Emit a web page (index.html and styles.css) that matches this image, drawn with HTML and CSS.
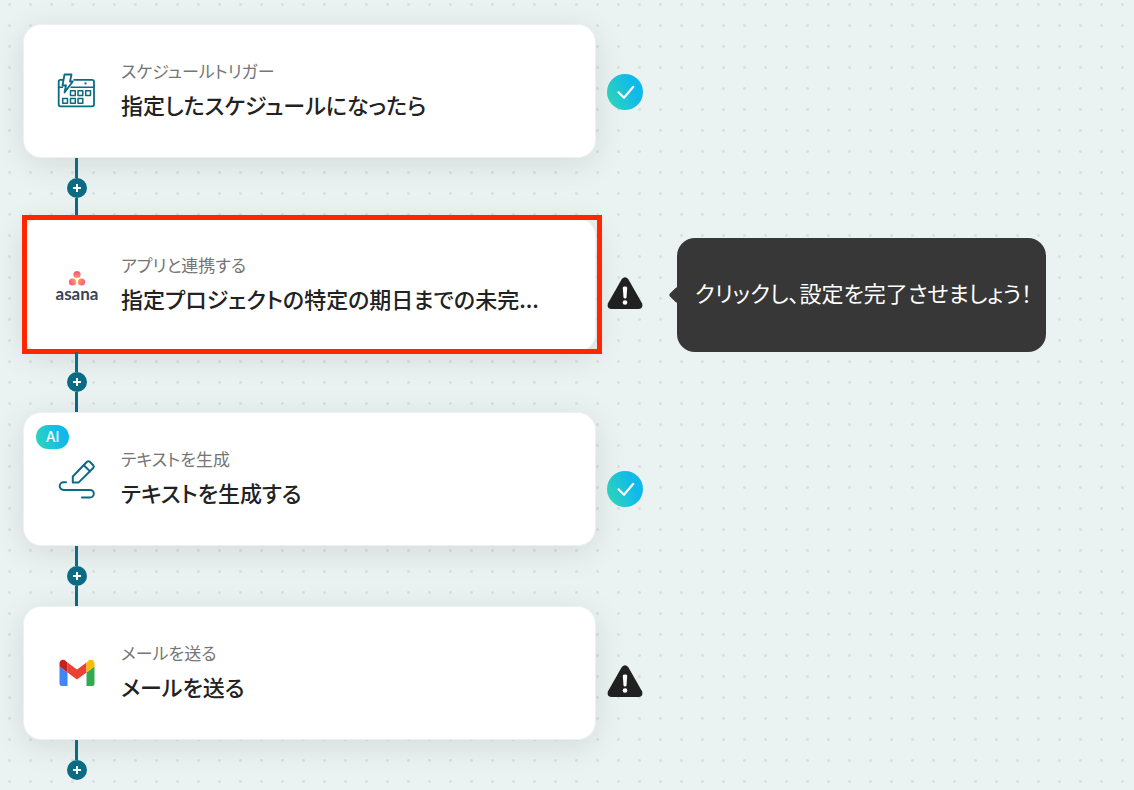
FILE: index.html
```html
<!DOCTYPE html>
<html lang="ja">
<head>
  <meta charset="UTF-8">
  <title>フロー編集</title>
  <meta name="viewport" content="width=device-width, initial-scale=1">
  <link rel="stylesheet" href="styles.css">
</head>
<body>

<!-- グラデーションの共通定義 -->
<svg class="defs" width="0" height="0" aria-hidden="true">
  <defs>
    <linearGradient id="done" x1="0" y1="0.7" x2="1" y2="0.3">
      <stop offset="0.05" stop-color="#2dd5c0"/>
      <stop offset="0.75" stop-color="#10b9ea"/>
    </linearGradient>
    <radialGradient id="asana" gradientUnits="userSpaceOnUse" cx="22" cy="12" r="10">
      <stop offset="0" stop-color="#ffb145"/>
      <stop offset="0.75" stop-color="#fc5d80"/>
      <stop offset="1" stop-color="#fb5a8c"/>
    </radialGradient>
    <symbol id="icon-check" viewBox="0 0 36 36">
      <circle cx="18" cy="18" r="18" fill="url(#done)"/>
      <path d="M11.500 18.300l5.500 5.400 9.300-10.900" fill="none" stroke="#fff" stroke-width="2.200" stroke-linecap="round" stroke-linejoin="round"/>
    </symbol>
    <symbol id="icon-warning" viewBox="0 0 36 32">
      <path d="M14.800 1.900Q18 -1.600 21.200 1.900L35 26.200Q36.500 31.500 32 32H4Q-0.500 31.500 1 26.200Z" fill="#212121"/>
      <path d="M15.800 10.800Q15.800 9.500 18 9.500T20.200 10.800L19.500 20.500Q19.300 21.500 18 21.500T16.500 20.500Z" fill="#fff"/>
      <circle cx="18" cy="25.500" r="2.300" fill="#fff"/>
    </symbol>
    <symbol id="icon-plus" viewBox="0 0 20 20">
      <path d="M10 6v8M6 10h8" stroke="#fff" stroke-width="2"/>
    </symbol>
  </defs>
</svg>

<main class="flow">
  <section class="step step-trigger">
    <article class="card">
      <svg class="card-icon" viewBox="0 0 44 44" fill="none" stroke="#0b6b84" stroke-width="1.800" stroke-linejoin="round">
        <path d="M9 10.800H5.500Q3.700 10.800 3.700 12.600V35.500Q3.700 37.300 5.500 37.300H37Q39 37.300 39 35.500V12.600Q39 10.800 37 10.800H18.500"/>
        <path d="M3.700 18.300H8M15.500 18.300H39" stroke-width="1.500"/>
        <path d="M9.500 5.500H16.500L15 12.500H17.800L9.500 23.500L11 16.500H7.500Z"/>
        <path d="M29.500 14.400h2" stroke-width="2"/>
        <path d="M15.500 21.800h4.800v4.800h-4.800zM23 21.800h4.800v4.800h-4.800zM30.700 21.800h4.800v4.800h-4.800zM7.700 29.500h4.800v4.800h-4.800zM15.500 29.500h4.800v4.800h-4.800zM23 29.500h4.800v4.800h-4.800z" stroke-width="1.500"/>
      </svg>
      <div class="card-text">
        <p class="kind">スケジュールトリガー</p>
        <h2 class="title">指定したスケジュールになったら</h2>
      </div>
    </article>
    <svg class="status" role="img" aria-label="設定済み"><use href="#icon-check"/></svg>
  </section>

  <div class="connector">
    <button class="add" type="button" aria-label="追加"><svg><use href="#icon-plus"/></svg></button>
  </div>

  <section class="step">
    <article class="card card-selected">
      <div class="card-icon asana">
        <svg viewBox="0 0 44 20" fill="url(#asana)">
          <circle cx="22" cy="6.500" r="3.600"/>
          <circle cx="17.500" cy="14" r="3.600"/>
          <circle cx="26.500" cy="14" r="3.600"/>
        </svg>
        <span>asana</span>
      </div>
      <div class="card-text">
        <p class="kind">アプリと連携する</p>
        <h2 class="title">指定プロジェクトの特定の期日までの未完...</h2>
      </div>
    </article>
    <svg class="status status-warning" role="img" aria-label="未設定"><use href="#icon-warning"/></svg>
    <p class="tooltip">クリックし、設定を完了させましょう！</p>
  </section>

  <div class="connector">
    <button class="add" type="button" aria-label="追加"><svg><use href="#icon-plus"/></svg></button>
  </div>

  <section class="step">
    <article class="card">
      <span class="badge">AI</span>
      <svg class="card-icon" viewBox="0 0 44 44" fill="none" stroke="#0b6b84" stroke-width="2" stroke-linecap="round" stroke-linejoin="round">
        <path d="M17.800 19.500L32 4.800Q33.400 3.600 34.800 4.800L38.200 8.300Q39.400 9.600 38.200 11L23.500 25.600H17.800Z"/>
        <path d="M28.800 8.200l6.200 6.200"/>
        <path d="M11 25.300H8.500A3.700 3.700 0 0 0 8.500 32.900H35A3.700 3.700 0 0 1 35 40.500H27"/>
      </svg>
      <div class="card-text">
        <p class="kind">テキストを生成</p>
        <h2 class="title">テキストを生成する</h2>
      </div>
    </article>
    <svg class="status" role="img" aria-label="設定済み"><use href="#icon-check"/></svg>
  </section>

  <div class="connector">
    <button class="add" type="button" aria-label="追加"><svg><use href="#icon-plus"/></svg></button>
  </div>

  <section class="step">
    <article class="card">
      <svg class="card-icon" viewBox="0 0 44 44">
        <path d="M4.500 15.500L12.500 21.500V35H7Q4.500 35 4.500 32.500Z" fill="#4285f4"/>
        <path d="M31.500 21.500L39.500 15.500V32.500Q39.500 35 37 35H31.500Z" fill="#34a853"/>
        <path d="M12.500 11.500L22 18.600L31.500 11.500V21.500L22 28.600L12.500 21.500Z" fill="#ea4335"/>
        <path d="M4.500 15.500V12.500C4.500 9 8.500 7.300 11 10.300L12.500 11.500V21.500Z" fill="#c5221f"/>
        <path d="M39.500 15.500V12.500C39.500 9 35.500 7.300 33 10.300L31.500 11.500V21.500Z" fill="#fbbc04"/>
      </svg>
      <div class="card-text">
        <p class="kind">メールを送る</p>
        <h2 class="title">メールを送る</h2>
      </div>
    </article>
    <svg class="status status-warning" role="img" aria-label="未設定"><use href="#icon-warning"/></svg>
  </section>

  <div class="connector connector-last">
    <button class="add" type="button" aria-label="追加"><svg><use href="#icon-plus"/></svg></button>
  </div>
</main>

</body>
</html>
```
FILE: styles.css
```css
* {
  box-sizing: border-box;
}

body {
  margin: 0;
  font-family: 'Noto Sans CJK JP', sans-serif;
  font-feature-settings: "palt";
  color: #222;
  background-color: #ebf3f2;
  background-image: radial-gradient(circle, #d9e0df 1px, transparent 2px);
  background-size: 21px 21px;
  background-position: -1px -6px;
}

.defs {
  position: absolute;
}

.flow {
  padding: 24px 24px 12px 23px;
}

.step {
  display: flex;
  align-items: flex-start;
}

.card {
  position: relative;
  display: flex;
  align-items: center;
  flex: 0 1 573px;
  min-width: 0;
  height: 134px;
  padding: 0 31px;
  border: 1px solid #eef1f1;
  border-radius: 18px;
  background: white;
  box-shadow: 0 6px 32px rgba(0, 0, 0, 0.1);
}

/* 選択中のカードを囲む赤枠 */
.card-selected::after {
  content: "";
  position: absolute;
  top: -4px;
  right: -7px;
  bottom: -3px;
  left: -2px;
  border: 5px solid #ff2600;
}

.card-icon {
  flex: none;
  width: 44px;
  height: 44px;
  margin-right: 22px;
}

.asana svg {
  display: block;
  width: 44px;
  height: 20px;
  margin-top: 5px;
}

.asana span {
  display: block;
  font-family: 'Lato', sans-serif;
  font-size: 17px;
  font-weight: 700;
  line-height: 12px;
  text-align: center;
  color: #3a4358;
}

.card-text {
  min-width: 0;
  padding-bottom: 4px;
}

.kind,
.title {
  margin: 0;
  white-space: nowrap;
  overflow: hidden;
  text-overflow: ellipsis;
}

.kind {
  font-size: 17px;
  line-height: 30px;
  color: #757575;
}

.title {
  font-size: 22px;
  font-weight: 500;
  line-height: 36px;
}

.badge {
  position: absolute;
  top: 12px;
  left: 12px;
  width: 33px;
  border-radius: 12px;
  font-family: 'Inter', sans-serif;
  font-size: 14px;
  font-weight: 500;
  line-height: 24px;
  text-align: center;
  color: white;
  background: linear-gradient(70deg, #2dd5c0 5%, #10b9ea 75%);
}

.status {
  flex: none;
  width: 36px;
  height: 36px;
  margin: 59px 0 0 11px;
}

.status-warning {
  height: 32px;
}

.step-trigger .status {
  margin-top: 50px;
}

.tooltip {
  position: relative;
  flex: none;
  margin: 20px 0 0 34px;
  padding: 0 14px 6px 18px;
  border-radius: 18px;
  font-size: 22px;
  line-height: 108px;
  white-space: nowrap;
  color: white;
  background: #373737;
}

.tooltip::before {
  content: "";
  position: absolute;
  top: 50%;
  left: -6px;
  width: 12px;
  height: 12px;
  margin-top: -6px;
  border-radius: 2px;
  background: #373737;
  transform: rotate(45deg);
}

.connector {
  position: relative;
  display: flex;
  flex-direction: column;
  width: 20px;
  height: 60px;
  margin-left: 44px;
}

.connector::before,
.connector::after {
  content: "";
  flex: 1;
  width: 3px;
  margin-left: 8px;
  background: #0b6b84;
}

.connector-last {
  height: 40px;
}

.connector-last::after {
  display: none;
}

.add {
  width: 20px;
  height: 20px;
  padding: 0;
  border: none;
  border-radius: 50%;
  background: #0b6b84;
  cursor: pointer;
}

.add svg {
  display: block;
  width: 20px;
  height: 20px;
}
```
